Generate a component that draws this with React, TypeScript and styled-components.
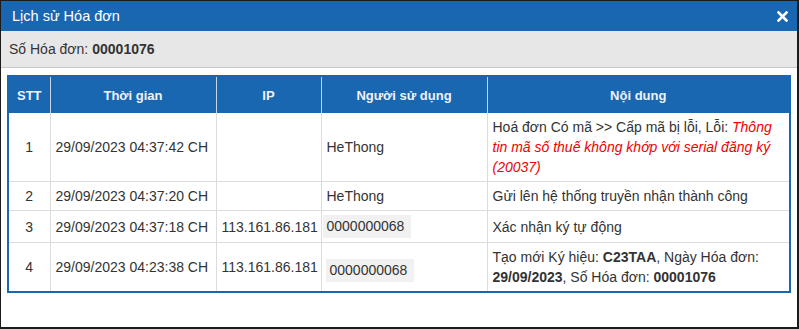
import * as React from 'react';
import styled, { createGlobalStyle } from 'styled-components';

interface LogEntry {
  stt: number;
  time: string;
  ip?: string;
  user: React.ReactNode;
  content: React.ReactNode;
}

const GlobalStyle = createGlobalStyle`
  html, body {
    margin: 0;
    padding: 0;
    background: #fff;
  }
  body {
    font-family: 'Liberation Sans', Arial, sans-serif;
    color: #333;
  }
`;

const Dialog = styled.div`
  box-sizing: border-box;
  width: 799px;
  height: 329px;
  border: 1px solid #1b1b1b;
  border-right-width: 2px;
  border-bottom-width: 2px;
  background: #fff;
  display: flex;
  flex-direction: column;
`;

const TitleBar = styled.header`
  height: 30px;
  background: #1a67b1;
  color: #fff;
  display: flex;
  align-items: center;
  justify-content: space-between;
  padding: 0 9px 0 11px;
  font-size: 14.5px;
`;

const CloseButton = styled.button`
  border: 0;
  background: transparent;
  padding: 0;
  width: 12px;
  height: 12px;
  display: flex;
  align-items: center;
  justify-content: center;
  cursor: pointer;
`;

const InfoBar = styled.div`
  height: 36px;
  background: #e7e7e7;
  border-bottom: 1px solid #c9c9c9;
  display: flex;
  align-items: center;
  padding: 0 8px;
  font-size: 14px;
  color: #333;

  b {
    margin-left: 4px;
  }
`;

const Body = styled.div`
  padding: 7px 6px 0 6px;
`;

const Table = styled.table`
  width: 784px;
  border-collapse: collapse;
  table-layout: fixed;
  border: 2px solid #1a67b1;
  font-size: 14px;
`;

const HeadCell = styled.th`
  background: #1a67b1;
  color: #eef2f7;
  font-weight: bold;
  font-size: 13px;
  height: 36px;
  padding: 0 5px;
  text-align: center;
  border-left: 1px solid #c9d6e4;
  &:first-child {
    border-left: 0;
  }
`;

const Cell = styled.td<{ $center?: boolean }>`
  padding: 4px 5px;
  line-height: 20px;
  border: 1px solid #dcdcdc;
  vertical-align: middle;
  text-align: ${({ $center }) => ($center ? 'center' : 'left')};
  &:first-child {
    border-left: 0;
  }
  &:last-child {
    border-right: 0;
  }
`;

const Row = styled.tr`
  &:first-child td {
    border-top: 0;
  }
  &:last-child td {
    border-bottom: 0;
  }
`;

const UserBox = styled.span<{ $inset?: boolean }>`
  display: inline-block;
  box-sizing: border-box;
  width: 88px;
  height: 23px;
  line-height: 23px;
  padding-left: 4px;
  background: #f1f1f1;
  margin-left: ${({ $inset }) => ($inset ? '-1px' : '-4px')};
  margin-top: ${({ $inset }) => ($inset ? '6px' : '0')};
  vertical-align: middle;
`;

const ErrorText = styled.i`
  color: #f00000;
`;

const entries: LogEntry[] = [
  {
    stt: 1,
    time: '29/09/2023 04:37:42 CH',
    user: 'HeThong',
    content: (
      <>
        Hoá đơn Có mã &gt;&gt; Cấp mã bị lỗi, Lỗi:{' '}
        <ErrorText>Thông tin mã số thuế không khớp với serial đăng ký (20037)</ErrorText>
      </>
    ),
  },
  {
    stt: 2,
    time: '29/09/2023 04:37:20 CH',
    user: 'HeThong',
    content: 'Gửi lên hệ thống truyền nhận thành công',
  },
  {
    stt: 3,
    time: '29/09/2023 04:37:18 CH',
    ip: '113.161.86.181',
    user: <UserBox>0000000068</UserBox>,
    content: 'Xác nhận ký tự động',
  },
  {
    stt: 4,
    time: '29/09/2023 04:23:38 CH',
    ip: '113.161.86.181',
    user: <UserBox $inset>0000000068</UserBox>,
    content: (
      <>
        Tạo mới Ký hiệu: <b>C23TAA</b>, Ngày Hóa đơn: <b>29/09/2023</b>, Số Hóa đơn:{' '}
        <b>00001076</b>
      </>
    ),
  },
];

function CloseIcon() {
  return (
    <svg width="11" height="11" viewBox="0 0 11 11">
      <path d="M1.5 1.5 L9.5 9.5 M9.5 1.5 L1.5 9.5" stroke="#fff" strokeWidth="2.6" strokeLinecap="square" />
    </svg>
  );
}

export default function App() {
  return (
    <>
      <GlobalStyle />
      <Dialog>
        <TitleBar>
          <span>Lịch sử Hóa đơn</span>
          <CloseButton aria-label="Đóng">
            <CloseIcon />
          </CloseButton>
        </TitleBar>
        <InfoBar>
          Số Hóa đơn: <b>00001076</b>
        </InfoBar>
        <Body>
          <Table>
            <colgroup>
              <col style={{ width: 42 }} />
              <col style={{ width: 166 }} />
              <col style={{ width: 105 }} />
              <col style={{ width: 166 }} />
              <col />
            </colgroup>
            <thead>
              <tr>
                <HeadCell>STT</HeadCell>
                <HeadCell>Thời gian</HeadCell>
                <HeadCell>IP</HeadCell>
                <HeadCell>Người sử dụng</HeadCell>
                <HeadCell>Nội dung</HeadCell>
              </tr>
            </thead>
            <tbody>
              {entries.map((e) => (
                <Row key={e.stt}>
                  <Cell $center>{e.stt}</Cell>
                  <Cell>{e.time}</Cell>
                  <Cell>{e.ip}</Cell>
                  <Cell>{e.user}</Cell>
                  <Cell>{e.content}</Cell>
                </Row>
              ))}
            </tbody>
          </Table>
        </Body>
      </Dialog>
    </>
  );
}
